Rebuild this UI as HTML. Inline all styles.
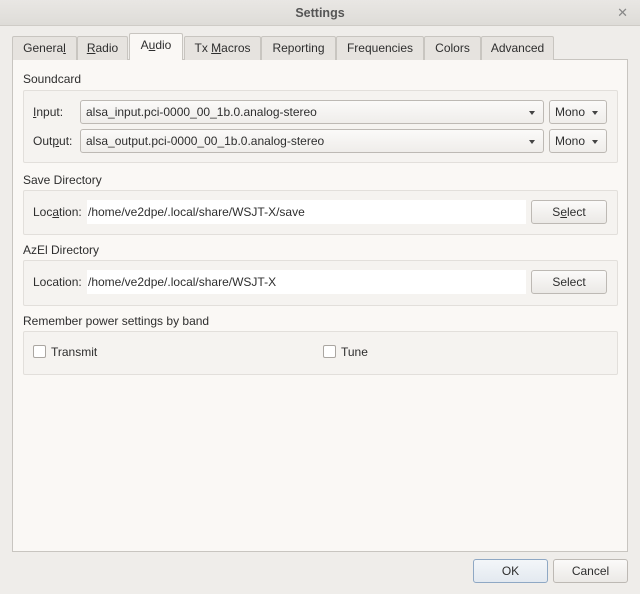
<!DOCTYPE html>
<html><head><style>
*{box-sizing:border-box;margin:0;padding:0}
body{width:640px;height:594px;background:#efedea;font-family:"Liberation Sans",sans-serif;font-size:12px;color:#2e2e2e;position:relative;overflow:hidden}
.a{position:absolute}
.title{left:0;top:0;width:640px;height:26px;background:linear-gradient(#e9e7e4,#dedcd8);border-bottom:1px solid #cfccc7;text-align:center;line-height:26px;font-weight:bold;color:#555;font-size:12.5px}
.x{right:12px;top:0;line-height:26px;color:#888;font-size:13px}
.tab{top:36px;height:24px;border:1px solid #c8c5c0;border-bottom:none;background:#e6e3df;text-align:center;line-height:23px;border-radius:2px 2px 0 0}
.tab.s{top:33px;height:27px;background:#faf8f5;z-index:2}
.pane{left:12px;top:59px;width:616px;height:493px;background:#faf8f5;border:1px solid #c8c5c0}
.grp{left:23px;width:595px;border:1px solid #e2dfdb;background:#f5f3f0;border-radius:2px}
.combo{height:24px;border:1px solid #bdb9b4;border-radius:3px;background:linear-gradient(#fbfaf9,#efedea);line-height:22px;padding-left:5px}
.arr{position:absolute;right:8px;top:10px;width:0;height:0;border-left:3.5px solid transparent;border-right:3.5px solid transparent;border-top:4px solid #444}
.field{height:24px;background:#fff;line-height:24px;padding-left:1px}
.btn{height:24px;border:1px solid #bdb9b4;border-radius:3px;background:linear-gradient(#fbfaf9,#ebe9e6);text-align:center;line-height:22px}
.cb{width:13px;height:13px;border:1px solid #aaa6a1;background:#fff;border-radius:2px}
u{text-decoration:underline}
</style></head><body>
<div class="a title">Settings</div><div class="a x">✕</div>
<div class="a pane"></div>
<div class="a tab" style="left:12px;width:65px">Genera<u>l</u></div>
<div class="a tab" style="left:77px;width:51px"><u>R</u>adio</div>
<div class="a tab s" style="left:129px;width:54px">A<u>u</u>dio</div>
<div class="a tab" style="left:184px;width:77px">Tx <u>M</u>acros</div>
<div class="a tab" style="left:261px;width:75px">Reportin<u>g</u></div>
<div class="a tab" style="left:336px;width:88px">Frequencies</div>
<div class="a tab" style="left:424px;width:57px">Colors</div>
<div class="a tab" style="left:481px;width:73px">Advanced</div>

<div class="a" style="left:23px;top:72px">Soundcard</div>
<div class="a grp" style="top:90px;height:73px"></div>
<div class="a" style="left:33px;top:105px"><u>I</u>nput:</div>
<div class="a combo" style="left:80px;top:100px;width:464px">alsa_input.pci-0000_00_1b.0.analog-stereo<span class="arr"></span></div>
<div class="a combo" style="left:549px;top:100px;width:58px">Mono<span class="arr"></span></div>
<div class="a" style="left:33px;top:134px">Out<u>p</u>ut:</div>
<div class="a combo" style="left:80px;top:129px;width:464px">alsa_output.pci-0000_00_1b.0.analog-stereo<span class="arr"></span></div>
<div class="a combo" style="left:549px;top:129px;width:58px">Mono<span class="arr"></span></div>

<div class="a" style="left:23px;top:173px">Save Directory</div>
<div class="a grp" style="top:190px;height:45px"></div>
<div class="a" style="left:33px;top:205px">Loc<u>a</u>tion:</div>
<div class="a field" style="left:87px;top:200px;width:439px">/home/ve2dpe/.local/share/WSJT-X/save</div>
<div class="a btn" style="left:531px;top:200px;width:76px">S<u>e</u>lect</div>

<div class="a" style="left:23px;top:243px">AzEl Directory</div>
<div class="a grp" style="top:260px;height:46px"></div>
<div class="a" style="left:33px;top:275px">Location:</div>
<div class="a field" style="left:87px;top:270px;width:439px">/home/ve2dpe/.local/share/WSJT-X</div>
<div class="a btn" style="left:531px;top:270px;width:76px">Select</div>

<div class="a" style="left:23px;top:314px">Remember power settings by band</div>
<div class="a grp" style="top:331px;height:44px"></div>
<div class="a cb" style="left:33px;top:345px"></div>
<div class="a" style="left:51px;top:345px">Transmit</div>
<div class="a cb" style="left:323px;top:345px"></div>
<div class="a" style="left:341px;top:345px">Tune</div>

<div class="a btn" style="left:473px;top:559px;width:75px;border-color:#8fa8c4;background:linear-gradient(#f3f6f9,#e3e9f0)">OK</div>
<div class="a btn" style="left:553px;top:559px;width:75px">Cancel</div>
</body></html>
